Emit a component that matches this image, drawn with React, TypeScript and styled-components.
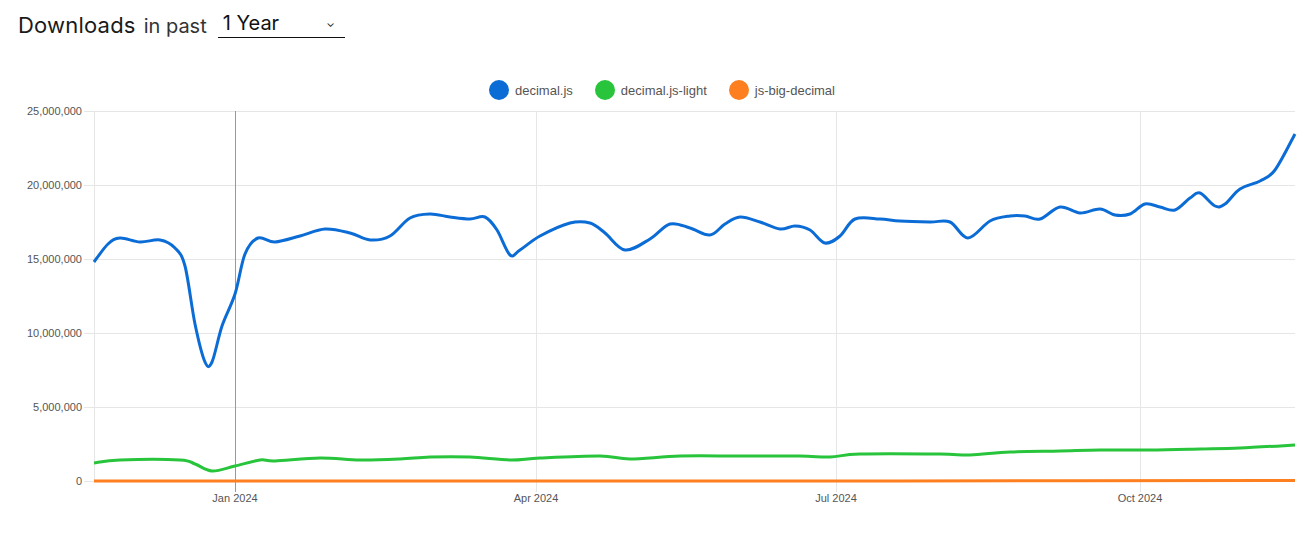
import React from 'react';
import styled, { createGlobalStyle } from 'styled-components';

const Global = createGlobalStyle`
  body { margin: 0; background: #fff; font-family: Inter, "Helvetica Neue", "Liberation Sans", sans-serif; }
`;

const Page = styled.div`
  width: 1316px;
  height: 534px;
  overflow: hidden;
`;

const Header = styled.div`
  display: flex;
  align-items: flex-end;
  padding: 6px 0 0 18px;
  height: 32px;
`;

const Title = styled.span`
  font-size: 22px;
  color: #1a1a1a;
  letter-spacing: 0.2px;
`;

const Sub = styled.span`
  font-size: 20px;
  color: #333;
  margin-left: 8px;
`;

const Select = styled.div`
  display: flex;
  align-items: center;
  justify-content: space-between;
  width: 122px;
  margin-left: 11px;
  padding: 0 0 2px 5px;
  border-bottom: 1px solid #111;
  font-size: 20px;
  color: #111;
`;

const Chevron = styled.span`
  font-size: 11px;
  margin-right: 10px;
`;

const Legend = styled.div`
  display: flex;
  justify-content: center;
  gap: 22px;
  margin-top: 42px;
  margin-left: 8px;
  font-family: "Helvetica Neue", "Liberation Sans", Arial, sans-serif;
  font-size: 13px;
  color: #555;
`;

const Item = styled.div`
  display: flex;
  align-items: center;
  gap: 6px;
`;

const Dot = styled.span<{ c: string }>`
  width: 20px;
  height: 20px;
  border-radius: 50%;
  background: ${p => p.c};
`;

const Chart = styled.svg`
  display: block;
  margin-top: 4px;
`;

const OFF = 100;

const blue: [number, number][] = [
  [94, 258], [108, 240], [120, 234], [140, 238], [160, 236], [175, 244], [185, 262], [195, 320], [205, 358], [212, 358],
  [222, 322], [235, 290], [245, 250], [258, 234], [275, 238], [300, 232], [325, 225], [350, 229], [370, 236], [390, 232],
  [410, 214], [430, 210], [450, 213], [470, 215], [485, 213], [497, 226], [510, 251], [520, 246], [540, 232], [570, 219],
  [590, 219], [605, 229], [625, 246], [650, 235], [670, 220], [690, 224], [710, 231], [725, 220], [740, 213], [760, 218],
  [780, 225], [795, 222], [810, 226], [825, 239], [840, 232], [855, 215], [880, 215], [900, 217], [930, 218], [950, 218],
  [968, 234], [990, 217], [1010, 212], [1025, 212], [1040, 215], [1060, 203], [1080, 209], [1100, 205], [1115, 211],
  [1130, 210], [1145, 200], [1160, 203], [1175, 206], [1190, 194], [1200, 189], [1215, 202], [1225, 200], [1240, 185],
  [1260, 177], [1275, 166], [1295, 130],
];

const green: [number, number][] = [
  [94, 459], [120, 456], [180, 456], [195, 460], [212, 467], [235, 462], [260, 456], [275, 457], [320, 454], [360, 456],
  [400, 455], [430, 453], [470, 453], [510, 456], [540, 454], [600, 452], [630, 455], [680, 452], [740, 452], [800, 452],
  [830, 453], [860, 450], [940, 450], [970, 451], [1010, 448], [1060, 447], [1100, 446], [1150, 446], [1200, 445],
  [1240, 444], [1295, 441],
];

const orange: [number, number][] = [
  [94, 477], [300, 477], [600, 477], [900, 477], [1295, 476.5],
];

// catmull-rom to cubic bezier
function smooth(pts: [number, number][]) {
  const p = pts.map(([x, y]) => [x, y - OFF] as [number, number]);
  let d = `M${p[0][0]},${p[0][1]}`;
  for (let i = 0; i < p.length - 1; i++) {
    const p0 = p[i - 1] || p[i];
    const p1 = p[i];
    const p2 = p[i + 1];
    const p3 = p[i + 2] || p2;
    const c1 = [p1[0] + (p2[0] - p0[0]) / 6, p1[1] + (p2[1] - p0[1]) / 6];
    const c2 = [p2[0] - (p3[0] - p1[0]) / 6, p2[1] - (p3[1] - p1[1]) / 6];
    d += ` C${c1[0]},${c1[1]} ${c2[0]},${c2[1]} ${p2[0]},${p2[1]}`;
  }
  return d;
}

const yTicks = ['25,000,000', '20,000,000', '15,000,000', '10,000,000', '5,000,000', '0'];
const xTicks = [
  { x: 235, label: 'Jan 2024' },
  { x: 536, label: 'Apr 2024' },
  { x: 836, label: 'Jul 2024' },
  { x: 1140, label: 'Oct 2024' },
];

export default function App() {
  return (
    <Page>
      <Global />
      <Header>
        <Title>Downloads</Title>
        <Sub>in past</Sub>
        <Select>
          1 Year
          <Chevron>⌄</Chevron>
        </Select>
      </Header>
      <Legend>
        <Item><Dot c="#0c6cd6" />decimal.js</Item>
        <Item><Dot c="#28c43b" />decimal.js-light</Item>
        <Item><Dot c="#fd7f1f" />js-big-decimal</Item>
      </Legend>
      <Chart width={1316} height={434} viewBox="0 0 1316 434">
        <g fontFamily='"Helvetica Neue", "Liberation Sans", Arial, sans-serif' fontSize="11" fill="#555">
          {yTicks.map((t, i) => {
            const y = 107 + i * 74 - OFF;
            return (
              <g key={t}>
                <line x1={84} x2={1295} y1={y + 0.5} y2={y + 0.5} stroke="#e6e6e6" />
                <text x={82} y={y + 4} textAnchor="end">{t}</text>
              </g>
            );
          })}
          <line x1={94.5} x2={94.5} y1={7} y2={377} stroke="#e6e6e6" />
          {xTicks.map((t, i) => (
            <g key={t.label}>
              <line x1={t.x + 0.5} x2={t.x + 0.5} y1={7} y2={388} stroke={i === 0 ? '#999' : '#e6e6e6'} />
              <text x={t.x} y={398} textAnchor="middle">{t.label}</text>
            </g>
          ))}
        </g>
        <path d={smooth(orange)} fill="none" stroke="#fd7f1f" strokeWidth={3} />
        <path d={smooth(green)} fill="none" stroke="#28c43b" strokeWidth={3} />
        <path d={smooth(blue)} fill="none" stroke="#0c6cd6" strokeWidth={3} />
      </Chart>
    </Page>
  );
}
